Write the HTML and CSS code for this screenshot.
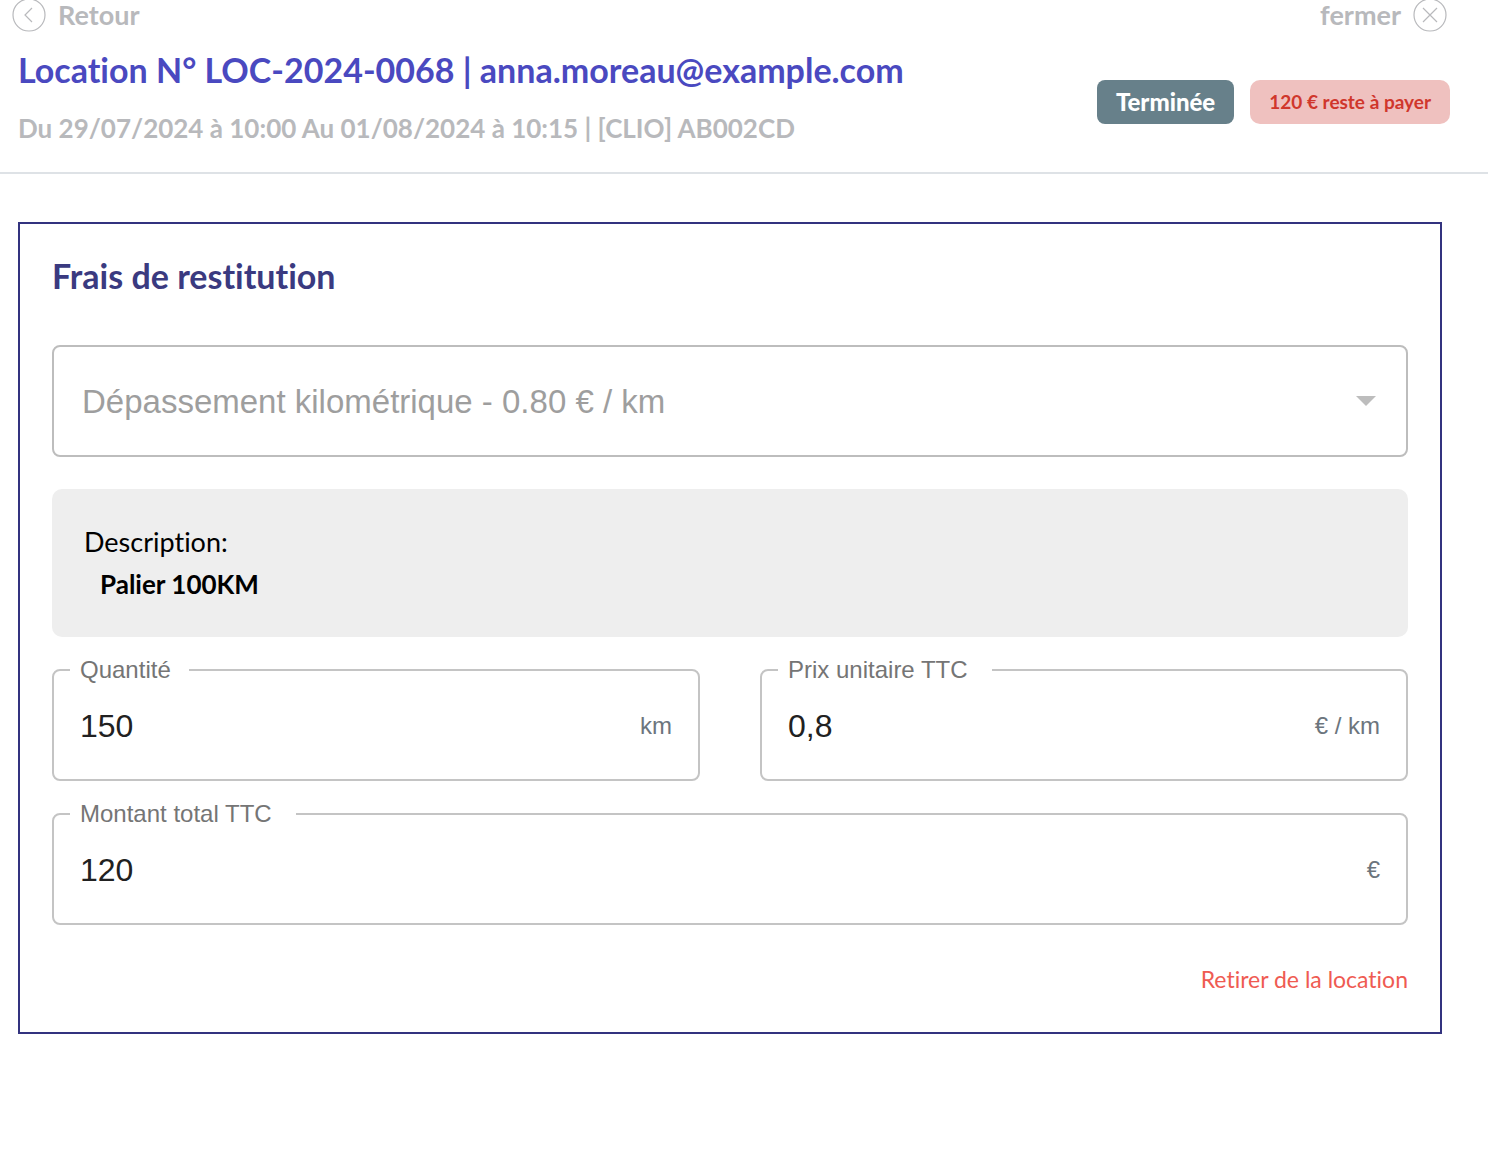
FILE: index.html
```html
<!DOCTYPE html>
<html lang="fr">
<head>
  <meta charset="utf-8">
  <meta name="viewport" content="width=device-width, initial-scale=1">
  <title>Location N° LOC-2024-0068</title>
  <link rel="stylesheet" href="styles.css">
</head>
<body>
  <header class="page-header">
    <nav class="toolbar">
      <button type="button" class="nav-button">
        <svg class="nav-icon" viewBox="0 0 34 34" aria-hidden="true">
          <circle cx="17" cy="17" r="16"/>
          <path d="M20 10l-7 7 7 7"/>
        </svg>
        Retour
      </button>
      <button type="button" class="nav-button">
        fermer
        <svg class="nav-icon" viewBox="0 0 34 34" aria-hidden="true">
          <circle cx="17" cy="17" r="16"/>
          <path d="M10 10l14 14M24 10l-14 14"/>
        </svg>
      </button>
    </nav>
    <div class="summary">
      <div class="summary-text">
        <h1 class="title">Location N° LOC-2024-0068 | anna.moreau@example.com</h1>
        <p class="subtitle">Du 29/07/2024 à 10:00 Au 01/08/2024 à 10:15 | [CLIO] AB002CD</p>
      </div>
      <div class="badges">
        <span class="badge badge-status">Terminée</span>
        <span class="badge badge-due">120 € reste à payer</span>
      </div>
    </div>
  </header>

  <main class="card">
    <h2 class="card-title">Frais de restitution</h2>

    <div class="select">
      <select class="select-input" aria-label="Type de frais" disabled>
        <option>Dépassement kilométrique - 0.80 € / km</option>
      </select>
      <svg class="select-arrow" viewBox="0 0 20 10" aria-hidden="true"><path d="M0 0h20L10 10z"/></svg>
    </div>

    <section class="description">
      <p>Description:</p>
      <p class="description-value">Palier 100KM</p>
    </section>

    <div class="field-row">
      <fieldset class="field">
        <legend class="field-legend field-legend-short"><label for="quantite">Quantité</label></legend>
        <div class="field-control">
          <input class="field-input" id="quantite" type="text" inputmode="decimal" value="150">
          <span class="field-unit">km</span>
        </div>
      </fieldset>
      <fieldset class="field">
        <legend class="field-legend"><label for="prix">Prix unitaire TTC</label></legend>
        <div class="field-control">
          <input class="field-input" id="prix" type="text" inputmode="decimal" value="0,8">
          <span class="field-unit">€ / km</span>
        </div>
      </fieldset>
    </div>
    <div class="field-row">
      <fieldset class="field">
        <legend class="field-legend"><label for="montant">Montant total TTC</label></legend>
        <div class="field-control">
          <input class="field-input" id="montant" type="text" inputmode="decimal" value="120">
          <span class="field-unit">€</span>
        </div>
      </fieldset>
    </div>

    <div class="card-actions">
      <button type="button" class="remove-button">Retirer de la location</button>
    </div>
  </main>
</body>
</html>
```
FILE: styles.css
```css
* {
  box-sizing: border-box;
}

body {
  margin: 0;
  background: #fff;
  color: #000;
  font-family: Lato, sans-serif;
  font-variant-ligatures: none;
}

h1,
h2,
p {
  margin: 0;
}

button {
  padding: 0;
  border: 0;
  background: none;
  font-family: inherit;
  font-variant-ligatures: inherit;
  cursor: pointer;
}

/* Header */

.page-header {
  border-bottom: 2px solid #dee2e6;
}

.toolbar {
  display: flex;
  justify-content: space-between;
  height: 30px;
  padding: 0 41px 0 12px;
}

.nav-button {
  display: flex;
  align-items: center;
  gap: 12px;
  color: #b8b9bc;
  font-size: 27px;
  font-weight: 700;
  line-height: 28px;
}

.nav-icon {
  flex: none;
  width: 34px;
  height: 34px;
  fill: none;
  stroke: currentColor;
  stroke-width: 1.2;
}

.summary {
  display: flex;
  align-items: center;
  justify-content: space-between;
  gap: 16px;
  padding: 20px 38px 26px 18px;
}

.title {
  margin-bottom: 20px;
  color: #4a49c0;
  font-size: 34px;
  font-weight: 700;
  line-height: 40px;
}

.subtitle {
  color: #b8b9bc;
  font-size: 26px;
  font-weight: 700;
  line-height: 36px;
}

.badges {
  display: flex;
  flex: none;
  gap: 16px;
  padding-top: 8px;
}

.badge {
  padding: 0 19px;
  border-radius: 8px;
  line-height: 44px;
}

.badge-status {
  background: #67808a;
  color: #fff;
  font-size: 24px;
  font-weight: 900;
}

.badge-due {
  border-radius: 10px;
  background: #efc1bf;
  color: #d0372c;
  font-size: 19px;
  font-weight: 700;
}

/* Card */

.card {
  margin: 48px 46px 48px 18px;
  padding: 32px;
  border: 2px solid #33337f;
}

.card-title {
  margin-bottom: 49px;
  color: #3a3a80;
  font-size: 34px;
  font-weight: 700;
  line-height: 40px;
}

.select {
  display: grid;
  align-items: center;
}

.select-input,
.select-arrow {
  grid-area: 1 / 1;
}

.select-input {
  width: 100%;
  height: 112px;
  padding: 0 80px 0 28px;
  border: 2px solid #bdbdbd;
  border-radius: 8px;
  appearance: none;
  background: #fff;
  color: #9e9e9e;
  font-family: "Liberation Sans", Arial, sans-serif;
  font-size: 33px;
  opacity: 1;
}

.select-arrow {
  justify-self: end;
  width: 20px;
  height: 10px;
  margin-right: 32px;
  fill: #bdbdbd;
  pointer-events: none;
}

.description {
  margin-top: 32px;
  padding: 32px;
  border-radius: 10px;
  background: #eee;
  font-size: 27px;
  line-height: 42px;
}

.description-value {
  padding-left: 16px;
  font-size: 26px;
  font-weight: 700;
}

/* Outlined fields */

.field-row {
  display: flex;
  gap: 60px;
  margin-top: 17px;
}

.field {
  flex: 1;
  min-width: 0;
  margin: 0;
  padding: 0 26px 13px 16px;
  border: 2px solid #c4c4c4;
  border-radius: 8px;
  font-family: "Liberation Sans", Arial, sans-serif;
}

.field-legend {
  padding: 0 24px 0 10px;
  color: #757575;
  font-size: 24px;
  line-height: 32px;
}

.field-legend-short {
  padding-right: 18px;
}

.field-control {
  display: flex;
  align-items: center;
  height: 80px;
  padding-left: 10px;
}

.field-input {
  flex: 1;
  min-width: 0;
  height: 100%;
  padding: 0;
  border: 0;
  outline: 0;
  background: none;
  color: #212121;
  font-family: inherit;
  font-size: 32px;
}

.field-unit {
  color: #6c757d;
  font-size: 24px;
}

.card-actions {
  display: flex;
  justify-content: flex-end;
  margin-top: 33px;
}

.remove-button {
  color: #ef5b52;
  font-size: 23px;
  line-height: 42px;
}
```
